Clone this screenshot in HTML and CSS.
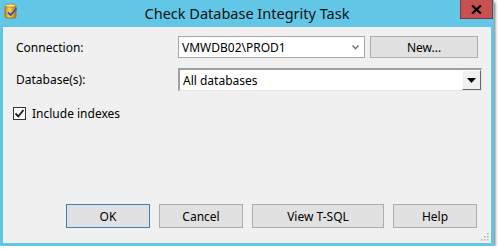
FILE: index.html
```html
<!DOCTYPE html>
<html lang="en">
<head>
    <meta charset="UTF-8">
    <title>Check Database Integrity Task</title>
    <link rel="stylesheet" href="styles.css">
</head>
<body>
    <div class="window">
        <div class="titlebar">
            <svg class="app-icon" width="14" height="16" viewBox="0 0 14 16">
                <defs>
                    <linearGradient id="can" x1="0" x2="1" y1="0" y2="0">
                        <stop offset="0" stop-color="#c98a12"/>
                        <stop offset="0.4" stop-color="#f6d45a"/>
                        <stop offset="1" stop-color="#b8780c"/>
                    </linearGradient>
                </defs>
                <rect x="1" y="2" width="11" height="13" rx="2" fill="url(#can)" stroke="#9a6508" stroke-width="0.8"/>
                <ellipse cx="6.5" cy="2.6" rx="5.2" ry="1.6" fill="#fbe58e" stroke="#9a6508" stroke-width="0.6"/>
                <path d="M4 9.5 L6.5 12 L12.5 5.5" fill="none" stroke="#2a52c8" stroke-width="1.8"/>
            </svg>
            <span class="title">Check Database Integrity Task</span>
            <div class="close-btn">
                <svg width="11" height="9" viewBox="0 0 11 9">
                    <path d="M1 0.5 L10 8.5 M10 0.5 L1 8.5" stroke="#000" stroke-width="2.2"/>
                </svg>
            </div>
        </div>

        <div class="client">
            <div class="form">
                <div class="row">
                    <span class="label">Connection:</span>
                    <div class="combo">
                        <span>VMWDB02\PROD1</span>
                        <svg class="chevron" width="7" height="5" viewBox="0 0 7 5">
                            <path d="M0.5 0.5 L3.5 3.8 L6.5 0.5" fill="none" stroke="#6d6d6d" stroke-width="1.4"/>
                        </svg>
                    </div>
                    <div class="btn btn-new">New...</div>
                </div>
                <div class="row row-db">
                    <span class="label">Database(s):</span>
                    <div class="combo-3d">
                        <span>All databases</span>
                        <div class="drop-btn">
                            <svg width="9" height="5" viewBox="0 0 9 5">
                                <path d="M0 0 L9 0 L4.5 5 Z" fill="#000"/>
                            </svg>
                        </div>
                    </div>
                </div>
                <label class="check">
                    <span class="box">
                        <svg width="11" height="11" viewBox="0 0 11 11">
                            <path d="M1.5 5.5 L4.3 8.4 L9.5 2" fill="none" stroke="#1a1a1a" stroke-width="1.8"/>
                        </svg>
                    </span>
                    Include indexes
                </label>
            </div>

            <div class="buttons">
                <div class="btn btn-default">OK</div>
                <div class="btn">Cancel</div>
                <div class="btn btn-wide">View T-SQL</div>
                <div class="btn">Help</div>
            </div>

            <svg class="grip" width="9" height="9" viewBox="0 0 9 9">
                <g fill="#b4b4b4">
                    <rect x="7" y="1" width="1.5" height="1.5"/>
                    <rect x="4" y="4" width="1.5" height="1.5"/>
                    <rect x="7" y="4" width="1.5" height="1.5"/>
                    <rect x="1" y="7" width="1.5" height="1.5"/>
                    <rect x="4" y="7" width="1.5" height="1.5"/>
                    <rect x="7" y="7" width="1.5" height="1.5"/>
                </g>
            </svg>
        </div>
    </div>
</body>
</html>
```

FILE: styles.css
```css
* {
    margin: 0;
    padding: 0;
    box-sizing: border-box;
}

body {
    background: #ffffff;
    font-family: "Noto Sans", "Open Sans", sans-serif;
    font-size: 12px;
    color: #000;
}

.window {
    width: 494px;
    height: 246px;
    background: #62c7e7;
    display: flex;
    flex-direction: column;
    box-shadow: 1px 2px 3px rgba(0, 0, 0, 0.6);
}

.titlebar {
    position: relative;
    height: 27px;
    flex-shrink: 0;
    display: flex;
    align-items: center;
    justify-content: center;
}

.app-icon {
    position: absolute;
    left: 4px;
    top: 3px;
}

.title {
    font-size: 14.5px;
    color: #111;
    margin-top: -1px;
}

.close-btn {
    position: absolute;
    right: 1px;
    top: 0;
    width: 33px;
    height: 19px;
    background: #c75050;
    border: 1px solid #7a3b3b;
    border-top: none;
    display: flex;
    align-items: center;
    justify-content: center;
}

.client {
    position: relative;
    flex: 1;
    margin: 0 3px 3px 3px;
    background: #f0f0f0;
    display: flex;
    flex-direction: column;
    justify-content: space-between;
}

.form {
    padding: 9px 0 0 13px;
}

.row {
    display: flex;
    align-items: center;
    height: 22px;
}

.row-db {
    margin-top: 10px;
    height: 23px;
}

.label {
    width: 162px;
    flex-shrink: 0;
}

.combo {
    width: 187px;
    height: 22px;
    background: #fff;
    border: 1px solid #a6a6a6;
    display: flex;
    align-items: center;
    justify-content: space-between;
    padding: 0 5px 0 3px;
}

.chevron {
    margin-top: 1px;
}

.btn {
    height: 24px;
    width: 84px;
    background: #e1e1e1;
    border: 1px solid #adadad;
    display: flex;
    align-items: center;
    justify-content: center;
}

.btn-new {
    width: 108px;
    height: 22px;
    margin-left: 5px;
}

.combo-3d {
    width: 304px;
    height: 23px;
    background: #fff;
    border-top: 2px solid #a0a0a0;
    border-left: 2px solid #a0a0a0;
    border-bottom: 1px solid #e3e3e3;
    border-right: 1px solid #e3e3e3;
    display: flex;
    align-items: center;
    justify-content: space-between;
    padding-left: 3px;
}

.drop-btn {
    width: 19px;
    height: 20px;
    background: #f0f0f0;
    border-top: 1px solid #fff;
    border-left: 1px solid #fff;
    border-right: 1px solid #696969;
    border-bottom: 1px solid #696969;
    display: flex;
    align-items: center;
    justify-content: center;
}

.check {
    display: flex;
    align-items: center;
    gap: 6px;
    margin-top: 14px;
    margin-left: -3px;
}

.box {
    width: 13px;
    height: 13px;
    background: #fff;
    border: 1px solid #333;
    display: flex;
    align-items: center;
    justify-content: center;
}

.buttons {
    display: flex;
    justify-content: flex-end;
    gap: 9px;
    padding: 0 14px 15px 0;
}

.btn-default {
    border-color: #3c7fb1;
}

.btn-wide {
    width: 132px;
}

.grip {
    position: absolute;
    right: 2px;
    bottom: 2px;
}
```
